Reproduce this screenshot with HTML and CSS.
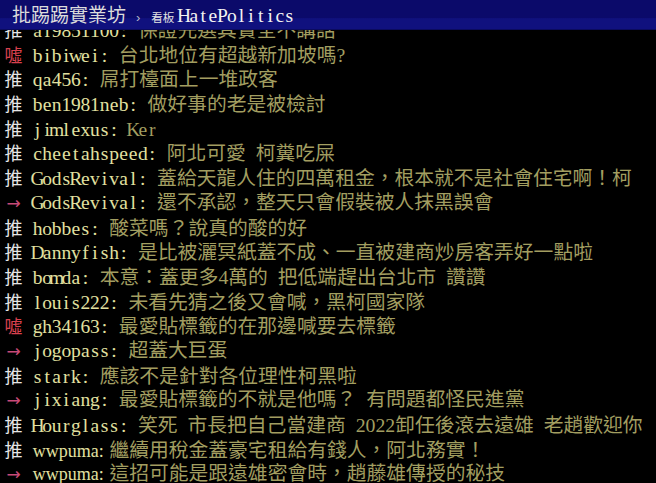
FILE: index.html
```html
<!DOCTYPE html>
<html lang="zh-Hant">
<head>
  <meta charset="UTF-8">
  <meta name="viewport" content="width=device-width, initial-scale=1.0">
  <title>批踢踢實業坊 › 看板 HatePolitics</title>
  <link rel="stylesheet" href="styles.css">
</head>
<body>
  <header class="bar">
    <span class="site">批踢踢實業坊</span>
    <span class="sep">›</span>
    <span class="board-label">看板</span>
    <span class="board half">HatePolitics</span>
  </header>

  <main class="comments">
    <div class="push"><span class="tag good">推</span><span class="user half">al9851100:</span><span class="text">保證先選其實全不講話</span></div>
    <div class="push"><span class="tag bad">噓</span><span class="user half">bibiwei:</span><span class="text">台北地位有超越新加坡嗎?</span></div>
    <div class="push"><span class="tag good">推</span><span class="user half">qa456:</span><span class="text">屌打檯面上一堆政客</span></div>
    <div class="push"><span class="tag good">推</span><span class="user half">ben1981neb:</span><span class="text">做好事的老是被檢討</span></div>
    <div class="push"><span class="tag good">推</span><span class="user half">jimlexus:</span><span class="text mono half">Ker</span></div>
    <div class="push"><span class="tag good">推</span><span class="user half">cheetahspeed:</span><span class="text">阿北可愛 柯糞吃屎</span></div>
    <div class="push"><span class="tag good">推</span><span class="user half">GodsRevival:</span><span class="text">蓋給天龍人住的四萬租金，根本就不是社會住宅啊！柯</span></div>
    <div class="push"><span class="tag arrow">→</span><span class="user half">GodsRevival:</span><span class="text">還不承認，整天只會假裝被人抹黑誤會</span></div>
    <div class="push"><span class="tag good">推</span><span class="user half">hobbes:</span><span class="text">酸菜嗎？說真的酸的好</span></div>
    <div class="push"><span class="tag good">推</span><span class="user half">Dannyfish:</span><span class="text">是比被灑冥紙蓋不成、一直被建商炒房客弄好一點啦</span></div>
    <div class="push"><span class="tag good">推</span><span class="user half">bomda:</span><span class="text">本意：蓋更多4萬的 把低端趕出台北市 讚讚</span></div>
    <div class="push"><span class="tag good">推</span><span class="user half">louis222:</span><span class="text">未看先猜之後又會喊，黑柯國家隊</span></div>
    <div class="push"><span class="tag bad">噓</span><span class="user half">gh34163:</span><span class="text">最愛貼標籤的在那邊喊要去標籤</span></div>
    <div class="push"><span class="tag arrow">→</span><span class="user half">jogopass:</span><span class="text">超蓋大巨蛋</span></div>
    <div class="push"><span class="tag good">推</span><span class="user half">stark:</span><span class="text">應該不是針對各位理性柯黑啦</span></div>
    <div class="push"><span class="tag arrow">→</span><span class="user half">jixiang:</span><span class="text">最愛貼標籤的不就是他嗎？ 有問題都怪民進黨</span></div>
    <div class="push"><span class="tag good">推</span><span class="user half">Hourglass:</span><span class="text">笑死 市長把自己當建商 2022卸任後滾去遠雄 老趙歡迎你</span></div>
    <div class="push"><span class="tag good">推</span><span class="user prop">wwpuma:</span><span class="text">繼續用稅金蓋豪宅租給有錢人，阿北務實！</span></div>
    <div class="push"><span class="tag arrow">→</span><span class="user prop">wwpuma:</span><span class="text">這招可能是跟遠雄密會時，趙藤雄傳授的秘技</span></div>
  </main>

  <script>
    // terminal style: every half-width char gets its own fixed cell
    document.querySelectorAll('.half').forEach(el => {
      const txt = el.textContent;
      el.textContent = '';
      for (const ch of txt) {
        const cell = document.createElement('span');
        cell.className = 'cell';
        cell.textContent = ch;
        el.appendChild(cell);
      }
    });
  </script>
</body>
</html>
```

FILE: styles.css
```css
body {
  margin: 0;
  background: #000;
  overflow: hidden;
  font-family: "Noto Sans CJK TC", sans-serif;
}

/* top bar sits over the scrolled comment list */
.bar {
  position: absolute;
  top: 0;
  left: 0;
  right: 0;
  height: 30px;
  display: flex;
  align-items: baseline;
  padding-left: 12px;
  box-sizing: border-box;
  background: linear-gradient(#0b0a6a 0, #0b0a6a 60%, #10117e 62%, #10117e 96%, #070748 100%);
  line-height: 28px;
  white-space: nowrap;
}
.site {
  font-size: 19px;
  color: #dcdcdc;
}
.sep {
  margin-left: 10px;
  font-family: "Liberation Sans", sans-serif;
  font-size: 13px;
  color: #b8b8c8;
}
.board-label {
  margin-left: 11px;
  font-size: 11.5px;
  color: #e2e2e2;
}
.board {
  margin-left: 5px;
  font-family: "Liberation Serif", serif;
  font-size: 19.5px;
  color: #f2f2f2;
}

.cell {
  display: inline-flex;
  justify-content: center;
  width: 9.57px;
}

.comments {
  padding: 17px 0 0 4px;
}
.push {
  height: 24.7px;
  line-height: 24.7px;
  white-space: nowrap;
  overflow: hidden;
  display: flex;
  align-items: baseline;
}
.tag {
  width: 19.2px;
  margin-right: 9.6px;
  font-size: 18px;
  text-align: center;
  flex: none;
}
.good { color: #e6e6e6; }
.bad { color: #d8404e; }
.arrow {
  color: #c84a78;
  font-family: "DejaVu Sans", sans-serif;
  font-size: 17px;
}
.user {
  margin-right: 9.57px;
  font-family: "Liberation Serif", serif;
  font-size: 19.5px;
  color: #e2e0a0;
  flex: none;
}
/* some ids are drawn in the proportional font */
.user.prop {
  width: 71px;
  margin-right: 5.6px;
  font-size: 18px;
}
.text {
  font-family: "Liberation Serif", "Noto Sans CJK TC", serif;
  font-size: 19.8px;
  word-spacing: 5px;
  color: #a29e60;
}
.text.mono {
  font-size: 19.5px;
}
```
